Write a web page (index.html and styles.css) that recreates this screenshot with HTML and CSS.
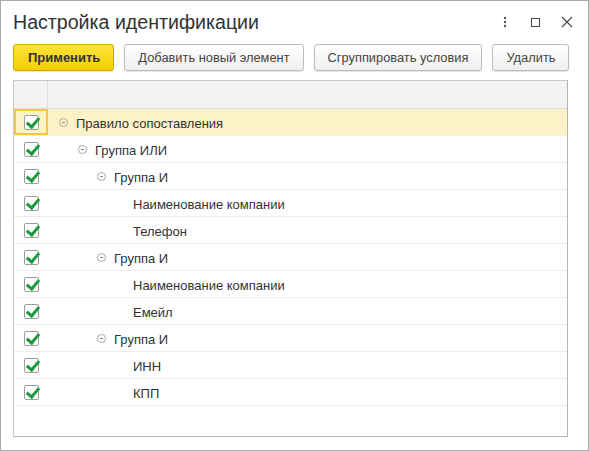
FILE: index.html
```html
<!DOCTYPE html>
<html lang="ru">
<head>
<meta charset="utf-8">
<title>Настройка идентификации</title>
<link rel="stylesheet" href="styles.css">
</head>
<body>
<div class="window">
  <div class="titlebar">
    <div class="title">Настройка идентификации</div>
    <div class="winctl">
      <svg class="ic-more" width="4" height="12" viewBox="0 0 4 12"><circle cx="2" cy="2" r="1.2" fill="#555"/><circle cx="2" cy="6" r="1.2" fill="#555"/><circle cx="2" cy="10" r="1.2" fill="#555"/></svg>
      <svg class="ic-max" width="11" height="11" viewBox="0 0 11 11"><rect x="1.5" y="1.5" width="8" height="8" fill="none" stroke="#444" stroke-width="1"/></svg>
      <svg class="ic-close" width="12" height="12" viewBox="0 0 12 12"><path d="M1 1 L11 11 M11 1 L1 11" stroke="#444" stroke-width="1.1" fill="none"/></svg>
    </div>
  </div>
  <div class="toolbar">
    <button class="btn btn-primary">Применить</button>
    <button class="btn">Добавить новый элемент</button>
    <button class="btn">Сгруппировать условия</button>
    <button class="btn">Удалить</button>
  </div>
  <div class="grid">
    <div class="grid-head"><div class="hc-check"></div><div class="hc-name"></div></div>
    <div class="row selected"><div class="c-check"><span class="cb"></span></div><div class="c-name lvl0"><span class="tog"></span>Правило сопоставления</div></div>
    <div class="row"><div class="c-check"><span class="cb"></span></div><div class="c-name lvl1"><span class="tog"></span>Группа ИЛИ</div></div>
    <div class="row"><div class="c-check"><span class="cb"></span></div><div class="c-name lvl2"><span class="tog"></span>Группа И</div></div>
    <div class="row"><div class="c-check"><span class="cb"></span></div><div class="c-name lvl3">Наименование компании</div></div>
    <div class="row"><div class="c-check"><span class="cb"></span></div><div class="c-name lvl3">Телефон</div></div>
    <div class="row"><div class="c-check"><span class="cb"></span></div><div class="c-name lvl2"><span class="tog"></span>Группа И</div></div>
    <div class="row"><div class="c-check"><span class="cb"></span></div><div class="c-name lvl3">Наименование компании</div></div>
    <div class="row"><div class="c-check"><span class="cb"></span></div><div class="c-name lvl3">Емейл</div></div>
    <div class="row"><div class="c-check"><span class="cb"></span></div><div class="c-name lvl2"><span class="tog"></span>Группа И</div></div>
    <div class="row"><div class="c-check"><span class="cb"></span></div><div class="c-name lvl3">ИНН</div></div>
    <div class="row"><div class="c-check"><span class="cb"></span></div><div class="c-name lvl3">КПП</div></div>
  </div>
</div>
</body>
</html>
```
FILE: styles.css
```css
* { box-sizing: border-box; }
html, body { margin: 0; padding: 0; background: #fff; }
body { font-family: "Liberation Sans", Arial, sans-serif; color: #333; }

.window {
  width: 589px;
  height: 451px;
  border: 1px solid #a9a9a9;
  background: #fff;
  display: flex;
  flex-direction: column;
  padding: 0 20px 0 12px;
}

.titlebar {
  display: flex;
  align-items: flex-start;
  justify-content: space-between;
  padding-top: 9px;
  height: 33px;
}
.title {
  font-size: 19.6px;
  line-height: 24px;
  color: #333;
}
.winctl {
  display: flex;
  align-items: center;
  margin-top: 6px;
  margin-right: -5px;
}
.ic-more { display: block; margin-right: 23px; }
.ic-max { display: block; margin-right: 20px; }
.ic-close { display: block; }

.toolbar {
  display: flex;
  gap: 10px;
  margin-top: 10px;
}
.btn {
  flex: none;
  height: 27px;
  padding: 0 13px;
  font-family: "Liberation Sans", Arial, sans-serif;
  font-size: 12.85px;
  white-space: nowrap;
  color: #444;
  background: linear-gradient(#ffffff, #efefef);
  border: 1px solid #bdbdbd;
  border-radius: 3px;
  box-shadow: 0 1px 1px rgba(0,0,0,0.12);
  cursor: default;
}
.btn-primary {
  padding: 0 13px 0 14px;
  font-size: 13px;
  font-weight: bold;
  color: #333;
  background: linear-gradient(#fbe43a, #f1cf00);
  border-color: #c9a900;
}

.grid {
  margin-top: 9px;
  height: 357px;
  border: 1px solid #c9c9c9;
  border-right-color: #b4b4b4;
  border-bottom-color: #b4b4b4;
  font-size: 13px;
}
.grid-head {
  display: flex;
  height: 28px;
  background: #f2f2f2;
  border-bottom: 1px solid #dcdcdc;
}
.hc-check {
  width: 34px;
  border-right: 1px solid #dcdcdc;
}
.hc-name { flex: 1; }

.row {
  display: flex;
  height: 27px;
  border-bottom: 1px solid #ececec;
}
.row.selected { background: #fdf2c6; }
.c-check {
  width: 34px;
  display: flex;
  align-items: center;
  justify-content: center;
  border: 2px solid transparent;
}
.row.selected .c-check {
  border-color: #f6c745;
  background: #fdf2c6;
}
.cb {
  position: relative;
  display: block;
  width: 15px;
  height: 15px;
  border: 1px solid #9c9c9c;
  border-radius: 2px;
  background: #fff;
}
.cb::after {
  content: "";
  position: absolute;
  left: 4px;
  top: -1px;
  width: 5px;
  height: 10px;
  border-right: 3px solid #1c9b3c;
  border-bottom: 3px solid #1c9b3c;
  transform: rotate(40deg);
}
.c-name {
  flex: 1;
  display: flex;
  align-items: center;
  padding-top: 2px;
  color: #333;
  white-space: nowrap;
}
.tog {
  display: block;
  width: 9px;
  height: 9px;
  border: 1px solid #a8a8a8;
  border-radius: 50%;
  position: relative;
  margin-right: 8px;
  margin-top: -1px;
}
.tog::after {
  content: "";
  position: absolute;
  left: 2px;
  top: 3px;
  width: 3px;
  height: 1px;
  background: #888;
}
.lvl0 { padding-left: 11px; }
.lvl1 { padding-left: 30px; }
.lvl2 { padding-left: 49px; }
.lvl3 { padding-left: 85px; }
```
